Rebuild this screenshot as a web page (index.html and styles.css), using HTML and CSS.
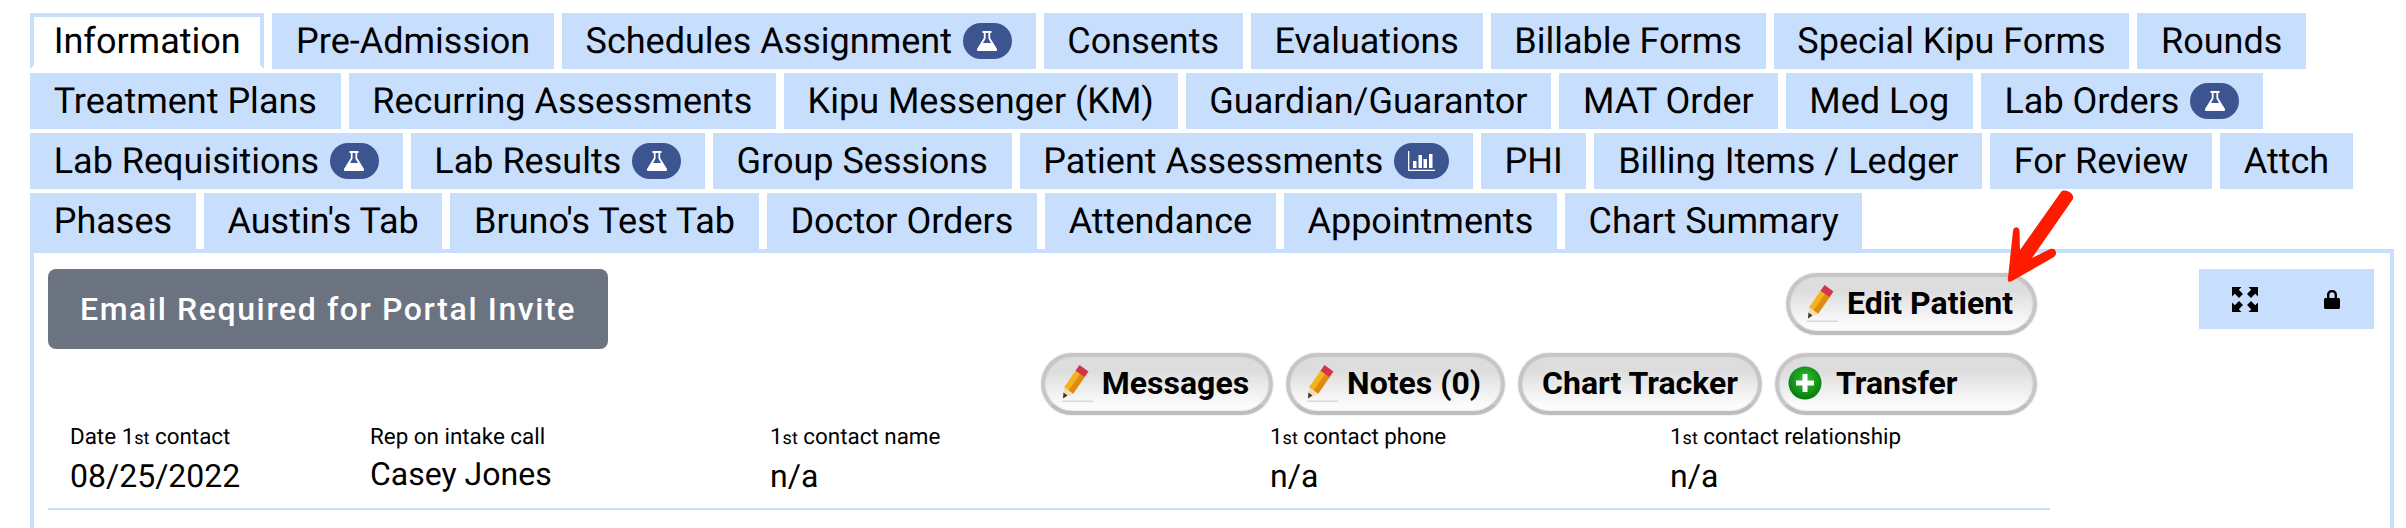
FILE: index.html
```html
<!DOCTYPE html>
<html lang="en">
<head>
  <meta charset="UTF-8">
  <title>Patient Information</title>
  <link rel="stylesheet" href="styles.css">
</head>
<body>
  <svg class="defs" width="0" height="0">
    <symbol id="flask" viewBox="0 0 20 20">
      <path fill-rule="evenodd" d="M5.5 0H14.5V2H13.2V7L20 18C20.6 19 20 20 19 20H1C0 20 -.6 19 0 18L6.8 7V2H5.5ZM8.6 2V7.6L6 12H14L11.4 7.6V2Z"/>
    </symbol>
    <symbol id="pencil" viewBox="0 0 32 40">
      <path fill="#d8d8d8" d="M1 37.5H32V39H1Z"/>
      <path fill="#f5b21c" d="M3.1 24.3 12.1 30.7 23.5 14.2 14.5 7.8Z"/>
      <path fill="#e08a10" d="M7.6 27.5 12.1 30.7 23.5 14.2 19 11Z"/>
      <path fill="#d2354a" d="M14.5 7.8 23.5 14.2 27.5 8.4 18.5 2Z"/>
      <path fill="#f2dcb4" d="M3.1 24.3 12.1 30.7 2 35.5Z"/>
      <path fill="#333" d="M2.5 29.5 6.4 32.5 2 35.5Z"/>
    </symbol>
  </svg>

  <nav class="tabs">
    <a class="tab active">Information</a>
    <a class="tab">Pre-Admission</a>
    <a class="tab">Schedules Assignment <span class="badge"><svg class="badge-icon"><use href="#flask"/></svg></span></a>
    <a class="tab">Consents</a>
    <a class="tab">Evaluations</a>
    <a class="tab">Billable Forms</a>
    <a class="tab">Special Kipu Forms</a>
    <a class="tab">Rounds</a>
    <a class="tab">Treatment Plans</a>
    <a class="tab">Recurring Assessments</a>
    <a class="tab">Kipu Messenger (KM)</a>
    <a class="tab">Guardian/Guarantor</a>
    <a class="tab">MAT Order</a>
    <a class="tab">Med Log</a>
    <a class="tab">Lab Orders <span class="badge"><svg class="badge-icon"><use href="#flask"/></svg></span></a>
    <a class="tab">Lab Requisitions <span class="badge"><svg class="badge-icon"><use href="#flask"/></svg></span></a>
    <a class="tab">Lab Results <span class="badge"><svg class="badge-icon"><use href="#flask"/></svg></span></a>
    <a class="tab">Group Sessions</a>
    <a class="tab">Patient Assessments <span class="badge badge-wide"><svg class="chart-icon" viewBox="0 0 27 20"><path d="M0 0H1.3V18.7H27V20H0Z"/><path d="M5 10H8.5V17H5ZM10.5 4H14V17H10.5ZM15.5 8H19V17H15.5ZM21 3H24.5V17H21Z"/></svg></span></a>
    <a class="tab">PHI</a>
    <a class="tab">Billing Items / Ledger</a>
    <a class="tab">For Review</a>
    <a class="tab">Attch</a>
    <a class="tab">Phases</a>
    <a class="tab">Austin's Tab</a>
    <a class="tab">Bruno's Test Tab</a>
    <a class="tab">Doctor Orders</a>
    <a class="tab">Attendance</a>
    <a class="tab">Appointments</a>
    <a class="tab">Chart Summary</a>
  </nav>

  <section class="panel">
    <div class="main">
      <div class="top">
        <button class="invite">Email Required for Portal Invite</button>
        <div class="actions">
          <div class="action-row">
            <button class="pill"><svg class="pill-icon"><use href="#pencil"/></svg>Edit Patient</button>
          </div>
          <div class="action-row">
            <button class="pill"><svg class="pill-icon"><use href="#pencil"/></svg>Messages</button>
            <button class="pill"><svg class="pill-icon"><use href="#pencil"/></svg>Notes (0)</button>
            <button class="pill pill-plain">Chart Tracker</button>
            <button class="pill pill-transfer">
              <svg class="plus-icon" viewBox="0 0 34 34">
                <defs>
                  <radialGradient id="greenBall" cx="50%" cy="40%" r="60%">
                    <stop offset="0" stop-color="#35c235"/>
                    <stop offset="1" stop-color="#067a0c"/>
                  </radialGradient>
                </defs>
                <circle cx="17" cy="17" r="16.5" fill="url(#greenBall)"/>
                <path fill="#fff" d="M14.5 8H19.5V14.5H26V19.5H19.5V26H14.5V19.5H8V14.5H14.5Z"/>
              </svg>Transfer
            </button>
          </div>
        </div>
      </div>
      <div class="contact">
        <div class="field field-date">
          <div class="label">Date 1<span class="ord">st</span> contact</div>
          <div class="value">08/25/2022</div>
        </div>
        <div class="field field-rep">
          <div class="label">Rep on intake call</div>
          <div class="value">Casey Jones</div>
        </div>
        <div class="field field-name">
          <div class="label">1<span class="ord">st</span> contact name</div>
          <div class="value">n/a</div>
        </div>
        <div class="field field-phone">
          <div class="label">1<span class="ord">st</span> contact phone</div>
          <div class="value">n/a</div>
        </div>
        <div class="field">
          <div class="label">1<span class="ord">st</span> contact relationship</div>
          <div class="value">n/a</div>
        </div>
      </div>
    </div>
    <div class="tools">
      <svg class="expand-icon" viewBox="0 0 26 25">
        <path d="M0 0H9.5L6.8 2.7 11 6.9 7 10.9 2.8 6.7 0 9.5Z"/>
        <path d="M26 0H16.5L19.2 2.7 15 6.9 19 10.9 23.2 6.7 26 9.5Z"/>
        <path d="M0 25H9.5L6.8 22.3 11 18.1 7 14.1 2.8 18.3 0 15.5Z"/>
        <path d="M26 25H16.5L19.2 22.3 15 18.1 19 14.1 23.2 18.3 26 15.5Z"/>
      </svg>
      <svg class="lock-icon" viewBox="0 0 16 19">
        <path fill-rule="evenodd" d="M3 8V5C3 2 5 0 8 0S13 2 13 5V8H14.5C15.3 8 16 8.7 16 9.5V17.5C16 18.3 15.3 19 14.5 19H1.5C.7 19 0 18.3 0 17.5V9.5C0 8.7 .7 8 1.5 8ZM5.4 8H10.6V5C10.6 3.4 9.6 2.3 8 2.3S5.4 3.4 5.4 5Z"/>
      </svg>
    </div>
  </section>

  <svg class="arrow" viewBox="0 0 72 96">
    <path fill="#ff1a00" d="M16 62 57 4C60 0 71 5 69 11L28 70 46 61C52 59 54 66 50 69L8 93C5 95 3 93 4 90L9 43C9.500 38 15 38 15.500 43Z"/>
  </svg>
</body>
</html>
```

FILE: styles.css
```css
* {
  box-sizing: border-box;
}

html, body {
  height: 100%;
}

body {
  font-family: Roboto, sans-serif;
  text-rendering: geometricPrecision;
  background-color: #fff;
  color: #000;
  margin: 0;
  padding: 13px 12px 0 30px;
  display: flex;
  flex-direction: column;
  overflow: hidden;
  position: relative;
}

.defs {
  position: absolute;
}

.tabs {
  display: flex;
  flex-wrap: wrap;
  gap: 4px 8px;
}

.tab {
  display: flex;
  align-items: center;
  height: 56px;
  padding: 0 19.7px;
  font-size: 36px;
  white-space: pre;
  background-color: #c8defd;
  border: 4px solid #c8defd;
}

.tab.active {
  background-color: #fff;
  border-bottom-color: #fff;
}

.badge {
  display: flex;
  align-items: center;
  justify-content: center;
  width: 49px;
  height: 36px;
  margin-left: 2px;
  border-radius: 18px;
  background-color: #3c5590;
}

.badge-wide {
  width: 55px;
}

.badge-icon {
  width: 20px;
  height: 20px;
  fill: #fff;
}

.chart-icon {
  width: 27px;
  height: 20px;
  fill: #fff;
}

.panel {
  flex: 1;
  display: flex;
  justify-content: space-between;
  padding: 16px 16px 0 14px;
  border: 4px solid #c8defd;
  border-bottom: 0;
}

.main {
  width: 2002px;
  align-self: flex-start;
  border-bottom: 2px solid #c8defd;
}

.top {
  display: flex;
  justify-content: space-between;
  align-items: flex-start;
  padding-right: 13px;
}

.invite {
  width: 560px;
  height: 80px;
  padding: 0;
  font-family: Roboto, sans-serif;
  font-size: 32px;
  font-weight: 500;
  letter-spacing: 1.6px;
  color: #fff;
  background-color: #6b7280;
  border: none;
  border-radius: 8px;
}

.actions {
  display: flex;
  flex-direction: column;
  align-items: flex-end;
  gap: 18px;
  padding-top: 4px;
}

.action-row {
  display: flex;
  gap: 13px;
}

.pill {
  display: flex;
  align-items: center;
  height: 62px;
  padding: 0 20px 3px 16px;
  font-family: Roboto, sans-serif;
  font-size: 32px;
  font-weight: 700;
  color: #000;
  background: linear-gradient(#dddddd 25%, #fcfcfc 90%);
  border: 4px solid #c6c6c6;
  border-bottom-color: #bdbdbd;
  border-radius: 31px;
  box-shadow: 0 0 2px #d0d0d0, inset 0 0 2px #d0d0d0;
}

.pill-plain {
  padding-left: 20px;
}

.pill-icon {
  width: 32px;
  height: 40px;
  margin-right: 9px;
}

.pill-transfer {
  width: 262px;
}

.plus-icon {
  width: 34px;
  height: 34px;
  margin-left: -7px;
  margin-right: 14px;
}

.contact {
  display: flex;
  padding: 9px 0 13px 22px;
}

.field-date {
  width: 300px;
}

.field-rep {
  width: 400px;
}

.field-name {
  width: 500px;
}

.field-phone {
  width: 400px;
}

.label {
  font-size: 22.4px;
  line-height: 26px;
}

.ord {
  font-size: 18px;
}

.value {
  margin-top: 5px;
  font-size: 32px;
  line-height: 38px;
}

.tools {
  display: flex;
  align-items: center;
  justify-content: space-between;
  width: 175px;
  height: 60px;
  padding: 0 34px 0 33px;
  background-color: #c8defd;
}

.expand-icon {
  width: 26px;
  height: 25px;
}

.lock-icon {
  width: 16px;
  height: 19px;
}

.arrow {
  position: absolute;
  left: 2004px;
  top: 188px;
  width: 72px;
  height: 96px;
}
```
